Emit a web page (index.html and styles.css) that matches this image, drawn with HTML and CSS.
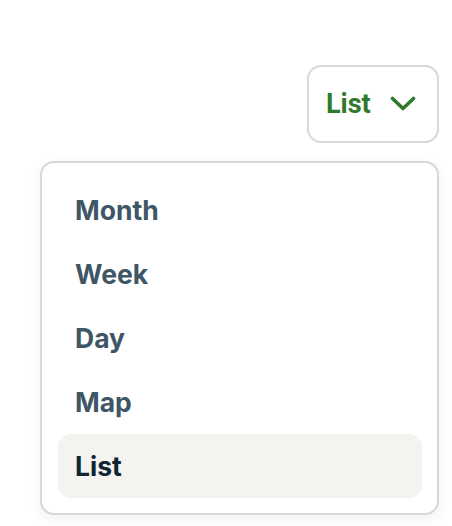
FILE: index.html
```html
<!DOCTYPE html>
<html>
<head>
<meta charset="utf-8">
<link rel="stylesheet" href="styles.css">
</head>
<body>
<div class="page">
  <div class="toolbar">
    <button class="view-btn" type="button">
      <span class="view-label">List</span>
      <svg class="chev" width="26" height="16" viewBox="0 0 26 16"><path d="M2.5 2.5 L13 12.5 L23.5 2.5" fill="none" stroke="#2f7a2c" stroke-width="3.6" stroke-linecap="round" stroke-linejoin="round"/></svg>
    </button>
  </div>
  <div class="menu-wrap">
    <ul class="menu">
      <li class="item">Month</li>
      <li class="item">Week</li>
      <li class="item">Day</li>
      <li class="item">Map</li>
      <li class="item active">List</li>
    </ul>
  </div>
</div>
</body>
</html>
```

FILE: styles.css
```css
html, body {
  margin: 0;
  padding: 0;
  background: #ffffff;
}
.page {
  width: 452px;
  height: 526px;
  position: relative;
  overflow: hidden;
}
.toolbar {
  display: flex;
  justify-content: flex-end;
  padding: 65px 13px 0 0;
}
.view-btn {
  width: 132px;
  height: 78px;
  box-sizing: border-box;
  border: 2px solid #d4d9dc;
  border-radius: 14px;
  background: #fff;
  display: flex;
  align-items: center;
  padding: 0 0 0 17px;
  gap: 19px;
  cursor: pointer;
}
.view-label {
  font-family: Roboto, "Liberation Sans", sans-serif;
  font-weight: 700;
  font-size: 27px;
  color: #2f7a2c;
  line-height: 1;
}
.chev { display: block; margin-top: 0px; }
.menu-wrap {
  padding: 18px 13px 0 40px;
}
.menu {
  list-style: none;
  margin: 0;
  padding: 15px 15px 15px 16px;
  border: 2px solid #d4d9dc;
  border-radius: 14px;
  background: #fff;
  box-shadow: 0 4px 14px rgba(0,0,0,0.06);
  display: flex;
  flex-direction: column;
}
.item {
  height: 64px;
  display: flex;
  align-items: center;
  padding-left: 17px;
  font-family: Inter, "Noto Sans", sans-serif;
  font-weight: 700;
  font-size: 26.5px;
  color: #3e5665;
  border-radius: 13px;
}
.item.active {
  background: #f4f3ef;
  color: #0e2633;
}
```
